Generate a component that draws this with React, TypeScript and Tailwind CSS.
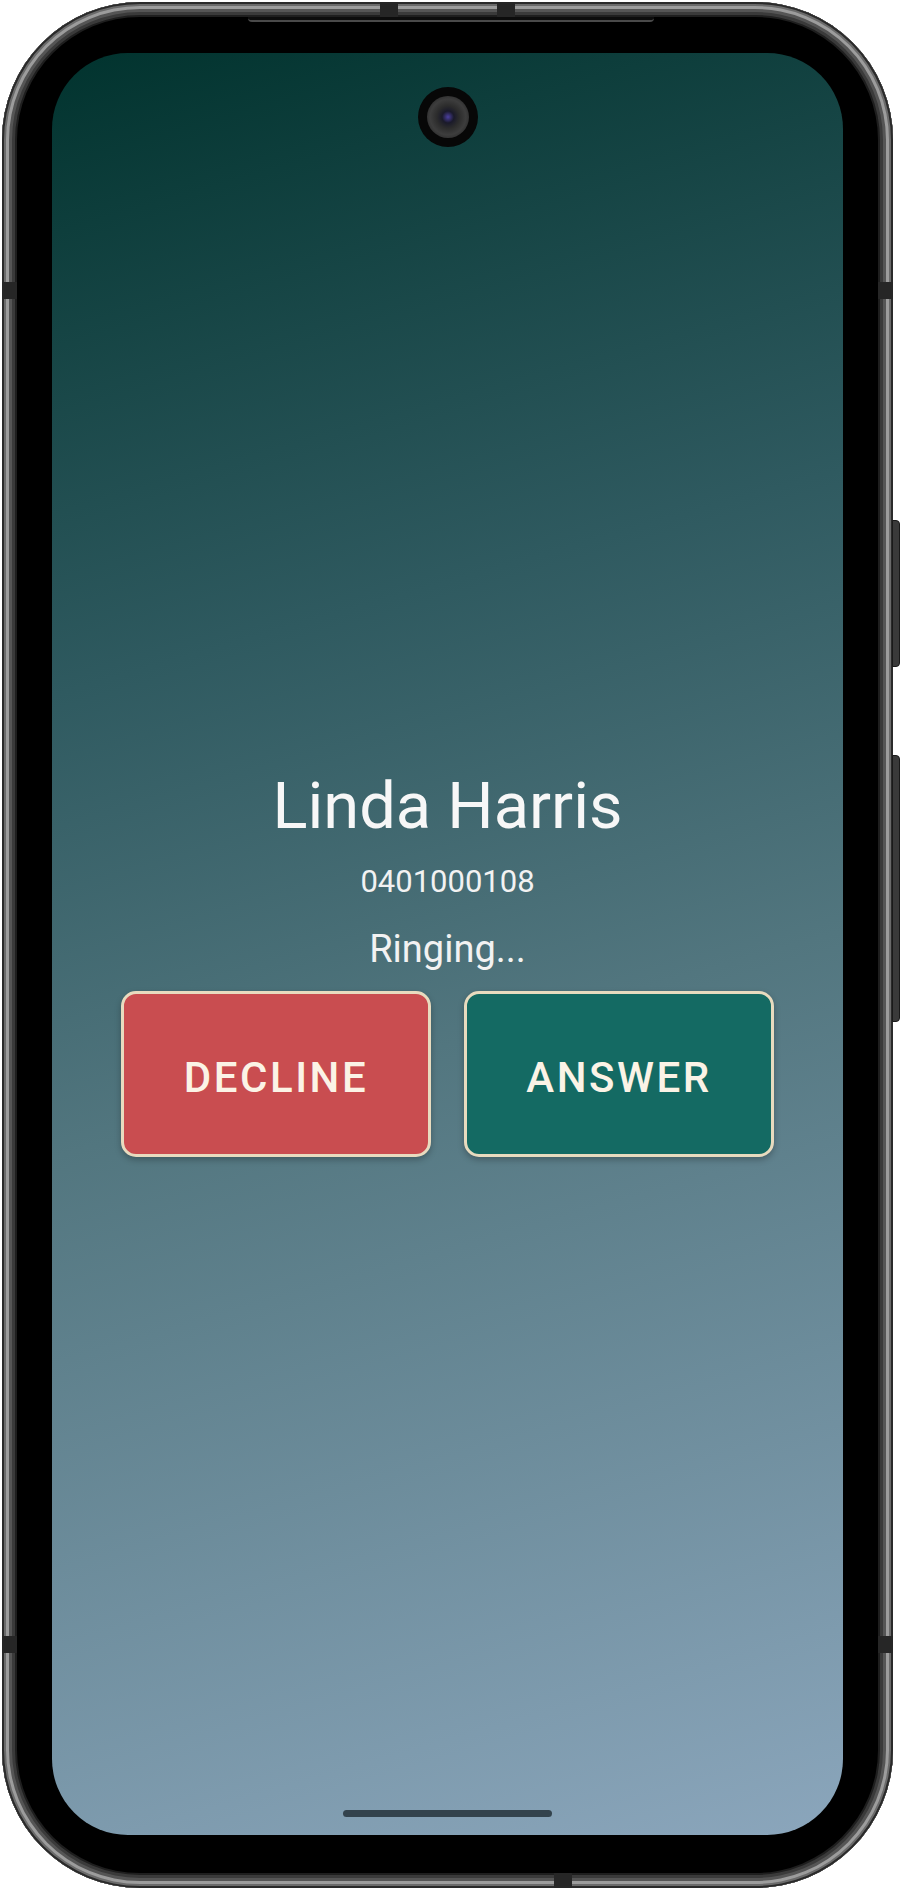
const CallButton = ({ label, color }: { label: string; color: string }) => (
  <button
    className={`w-[310px] h-[166px] pt-[7px] rounded-[15px] border-[3px] border-[#e8dbbf] text-[#fbf3e6] text-[42px] font-medium tracking-[0.06em] shadow-[0_3px_6px_rgba(0,0,0,0.25)] ${color}`}
  >
    {label}
  </button>
);

const IncomingCall = () => {
  return (
    <div className="w-[900px] h-[1890px] bg-white overflow-hidden pt-[2px] pl-[2px] font-['Roboto',sans-serif]">
      <div className="relative w-[891px] h-[1886px] rounded-[138px] bg-black pt-[51px] pl-[50px] shadow-[inset_0_0_0_2px_#2a2a2a,inset_0_0_0_4px_#6a6a6a,inset_0_0_0_7px_#9c9c9c,inset_0_0_0_10px_#555555,inset_0_0_0_13px_#3a3a3a,inset_0_0_0_15px_#1e1e1e]">
        {/* antenna breaks in the metal frame */}
        <div className="absolute top-0 left-[378px] flex gap-[99px]">
          <div className="w-[18px] h-[15px] bg-[#262626]" />
          <div className="w-[18px] h-[15px] bg-[#262626]" />
        </div>
        <div className="absolute bottom-0 left-[552px] w-[18px] h-[15px] bg-[#262626]" />
        <div className="absolute inset-x-0 top-[280px] h-[1371px] flex justify-between">
          <div className="flex flex-col justify-between">
            <div className="w-[15px] h-[17px] bg-[#262626]" />
            <div className="w-[15px] h-[17px] bg-[#262626]" />
          </div>
          <div className="flex flex-col justify-between">
            <div className="w-[15px] h-[17px] bg-[#262626]" />
            <div className="w-[15px] h-[17px] bg-[#262626]" />
          </div>
        </div>

        {/* earpiece slit */}
        <div className="absolute top-[15px] left-[246px] w-[406px] h-[5px] rounded-b-[4px] bg-[#0c0c0c] border-b-2 border-[#4a4a4a]" />

        {/* side keys */}
        <div className="absolute right-[-7px] top-[518px] flex flex-col gap-[88px]">
          <div className="w-[8px] h-[147px] rounded-r-[4px] bg-[#3a3a3a] border border-[#1a1a1a]" />
          <div className="w-[8px] h-[267px] rounded-r-[4px] bg-[#3a3a3a] border border-[#1a1a1a]" />
        </div>

        <div className="w-[791px] h-[1782px] rounded-[76px] overflow-hidden flex flex-col items-center bg-[linear-gradient(164deg,#01332e_0%,#2f5a60_32%,#52767f_55%,#8ba6bc_100%)]">
          <div className="mt-[34px] w-[60px] h-[60px] rounded-full bg-[#070707] flex items-center justify-center">
            <div className="w-[42px] h-[42px] rounded-full bg-[radial-gradient(circle,#4b3fa0_0%,#1a1a2a_20%,#2c2c2c_38%,#3d3d3d_60%,#161616_100%)]" />
          </div>

          <div className="mt-[627px] text-[65px] leading-[65px] text-[#f7f7f7]">Linda Harris</div>
          <div className="mt-[27px] text-[31px] leading-[32px] text-[#f2f2f2]">0401000108</div>
          <div className="mt-[32px] text-[38px] leading-[38px] text-[#f2f2f2]">Ringing...</div>

          <div className="mt-[23px] flex gap-[33px]">
            <CallButton label="DECLINE" color="bg-[#c94d50]" />
            <CallButton label="ANSWER" color="bg-[#146a63]" />
          </div>

          <div className="mt-auto mb-[18px] w-[209px] h-[7px] rounded-full bg-[#33434d]" />
        </div>
      </div>
    </div>
  );
};

export default function App() {
  return <IncomingCall />;
}
